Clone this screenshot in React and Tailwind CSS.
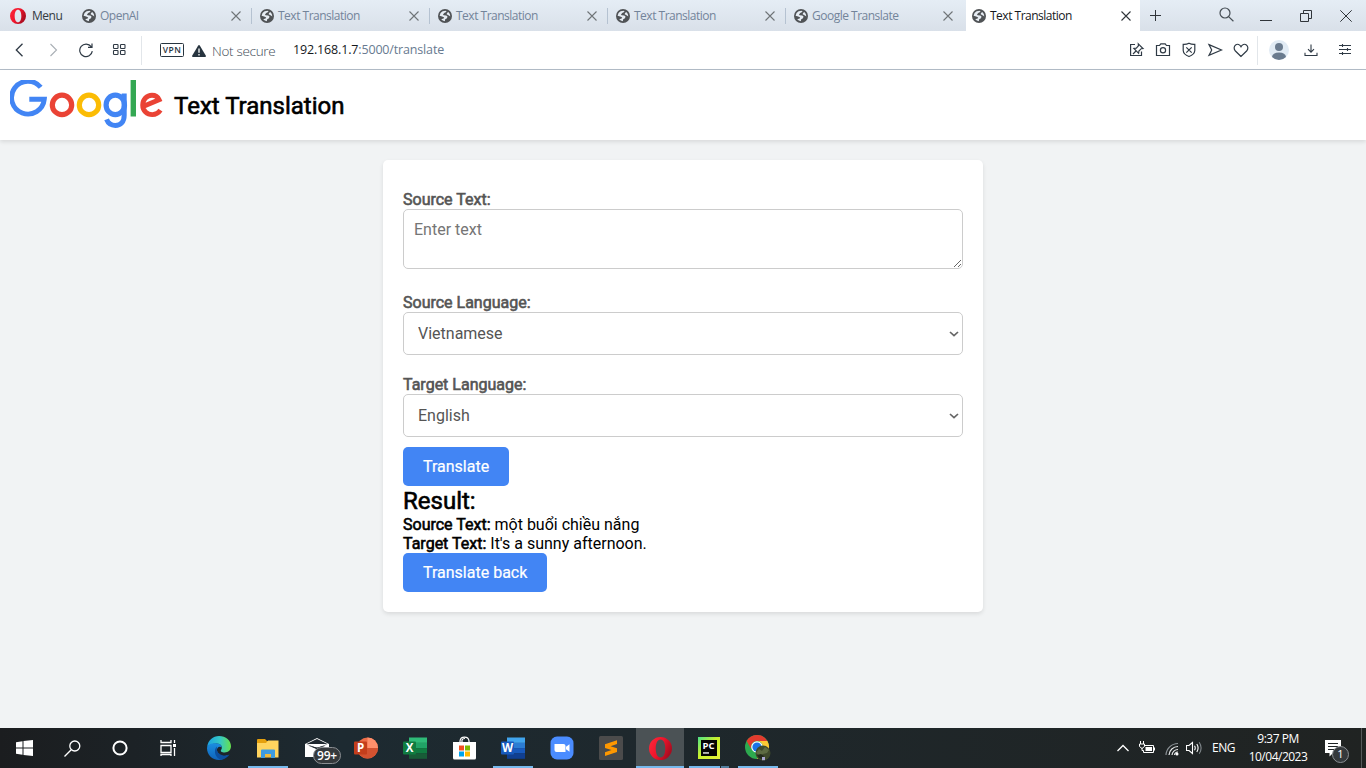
import React from "react";

const UI = "font-['Open_Sans','Noto_Sans',sans-serif]";

function Icon({ size = 16, className = "", children, sw = 1, color = "#2f3a45", vb = 16 }) {
  return (
    <svg width={size} height={size} viewBox={`0 0 ${vb} ${vb}`} fill="none" stroke={color} strokeWidth={sw} className={"shrink-0 " + className}>
      {children}
    </svg>
  );
}

function Globe() {
  return (
    <svg width="14" height="14" viewBox="0 0 14 14" className="shrink-0">
      <circle cx="7" cy="7" r="7" fill="#505356" />
      <path d="M1.600 6.800Q2 3.600 4.600 2.300L7.600 1.700L8.600 2.800L6.200 3.900L5 5.400L5.600 6.300L8.300 6.400L9.500 7.600L9 9.200L7.200 10.200L6.800 12.200Q4.600 12 3.200 10.300L5.600 9.600L6.200 8.400L4.200 7.500Z" fill="#e6ecf3" />
      <path d="M10.300 3Q12.300 4.700 12.300 7.400L10.900 6.600L8.700 5.300L9 4Z" fill="#e6ecf3" />
    </svg>
  );
}

function OperaO({ size }) {
  return (
    <svg width={size} height={size} viewBox="0 0 24 24" className="shrink-0">
      <defs>
        <linearGradient id={"op" + size} x1="0" x2="1" y1="0" y2=".5">
          <stop offset="0" stopColor="#ff2b3c" />
          <stop offset=".55" stopColor="#f0142b" />
          <stop offset="1" stopColor="#a90d20" />
        </linearGradient>
      </defs>
      <path fillRule="evenodd" fill={`url(#op${size})`} d="M12 0a12 12 0 1 0 0 24a12 12 0 0 0 0-24ZM12 2.6c3.2 0 5 4 5 9.4s-1.8 9.4-5 9.4s-5-4-5-9.4s1.800-9.400 5-9.400Z" />
    </svg>
  );
}

function Cross({ size = 10, color = "#6f7477" }) {
  return (
    <Icon size={size} vb={10} color={color} sw={1.1}>
      <path d="M.5 .5L9.5 9.5M9.5 .5L.5 9.5" />
    </Icon>
  );
}

const tabs = ["OpenAI", "Text Translation", "Text Translation", "Text Translation", "Google Translate"];

function TabBar() {
  return (
    <div className={"flex h-[31px] bg-linear-to-b from-[#e5edf5] to-[#d9e0e9] text-[12px] " + UI}>
      <div className="flex w-[74px] items-center pl-2.5 pt-[1px]">
        <OperaO size={16} />
        <span className="ml-[6px] text-[12px] tracking-[-0.5px] text-[#333a42]">Menu</span>
      </div>
      {tabs.map((t, i) => (
        <div key={i} className="flex w-[178px] items-center pl-2">
          <Globe />
          <span className="ml-1 w-[131px] tracking-[-0.5px] text-[#73849a]">{t}</span>
          <Cross />
          {i < 4 && <div className="ml-[10px] h-4 w-px shrink-0 bg-[#b5c2d1]" />}
        </div>
      ))}
      <div className="ml-[2px] flex w-[174px] items-center bg-white pl-1.5">
        <Globe />
        <span className="ml-1 w-[131px] tracking-[-0.5px] text-[#15181c]">Text Translation</span>
        <Cross color="#30353a" />
      </div>
      <div className="flex flex-1 items-center justify-between pl-[10px] pr-[14px]">
        <Icon size={11} vb={11} color="#30353a"><path d="M5.5 0V11M0 5.5H11" /></Icon>
        <div className="flex items-center">
          <Icon size={15} vb={15} sw={1.2} color="#454d54" className="relative -top-[1px]"><circle cx="6" cy="6" r="5" /><path d="M9.6 9.6L14.4 14.2" /></Icon>
          <Icon size={12} vb={12} color="#30353a" className="ml-[26px]"><path d="M0 10.5H12" /></Icon>
          <Icon size={12} vb={12} color="#30353a" className="ml-[28px]"><path d="M.5 3.5H8.5V11.5H.5ZM3.5 3.5V.5H11.5V8.5H8.5" /></Icon>
          <Icon size={12} vb={12} color="#30353a" className="ml-[28px]"><path d="M.3 .3L11.7 11.7M11.7 .3L.3 11.7" /></Icon>
        </div>
      </div>
    </div>
  );
}

function AddressBar() {
  return (
    <div className={"flex h-[39px] items-center border-b border-[#b3bdc8] bg-white " + UI}>
      <div className="flex w-[142px] items-center pl-3">
        <Icon sw={1.3}><path d="M10.5 1.8L4.3 8L10.5 14.2" /></Icon>
        <Icon sw={1.1} color="#a9afb5" className="ml-[17px]"><path d="M5.5 2L11.500 8L5.500 14" /></Icon>
        <Icon sw={1.2} className="ml-[18px] -translate-x-px"><path d="M13.2 4.7A6.3 6.3 0 1 0 14.3 9.2M14 1.5V5.3H10" /></Icon>
        <Icon sw={1.1} className="ml-[17px] -translate-x-px"><rect x="2.500" y="2.500" width="4.500" height="4" rx=".7" /><rect x="9.500" y="2.500" width="4.500" height="4" rx=".7" /><rect x="2.500" y="8.500" width="4.500" height="4" rx=".7" /><rect x="9.500" y="8.500" width="4.500" height="4" rx=".7" /></Icon>
      </div>
      <div className="-ml-px h-[29px] w-px bg-[#e2e6ea]" />
      <div className="ml-[18px] flex h-[14px] w-[24px] items-center justify-center rounded-[1.5px] border border-[#27343f] text-[8.5px] leading-none font-semibold tracking-[0.5px] text-[#27343f]">VPN</div>
      <svg width="14" height="12" viewBox="0 0 14 12" className="relative top-px ml-2">
        <path d="M6.2 .5Q7 -.4 7.8 .5L14 11Q14 12 13 12H1Q0 12 0 11Z" fill="#27343f" />
        <path d="M7 3.6V7.8M7 9V10.4" stroke="#fff" strokeWidth="1.3" />
      </svg>
      <span className="relative top-[1px] ml-[6px] w-[81px] text-[13.500px] font-light tracking-[-0.300px] whitespace-nowrap text-[#414c57]">Not secure</span>
      <span className="text-[12.500px] tracking-[-0.160px] text-[#687a90]"><span className="text-[#15181c]">192.168.1.7</span>:5000/translate</span>
      <div className="ml-auto flex items-center pr-[14px]">
        <div className="flex gap-[10px]">
          <Icon sw={1.2}><path d="M6 2.500H1.600V13.500H12.500V9.500M4 12L7 9M9.300 1.800L14 6.500L12.200 6.700L9.900 9L9.600 11.300L4.900 6.500L7.300 6.200L9.400 3.900Z" /></Icon>
          <Icon sw={1.2}><path d="M1.500 3.500H4.500L5.800 1.800H10.200L11.500 3.500H14.500V13.500H1.500Z" /><circle cx="8" cy="8.2" r="2.600" /></Icon>
          <Icon sw={1.2}><path d="M8 1.3Q10.5 2.600 13.800 2.400V8.500Q13.500 12.500 8 14.500Q2.500 12.500 2.200 8.500V2.400Q5.500 2.600 8 1.300ZM5.300 5.300L10.700 10.700M10.700 5.300L5.300 10.700" /></Icon>
          <Icon sw={1.2}><path d="M2 2.600L14.500 8L2 13.400L4.700 8Z" /></Icon>
          <Icon sw={1.2}><path d="M8 14.5L2.400 9C.6 7 .8 4.200 2.600 2.900C4.500 1.600 6.900 2.400 8 4.700C9.100 2.400 11.500 1.600 13.400 2.900C15.200 4.200 15.400 7 13.600 9Z" /></Icon>
        </div>
        <div className="ml-2 h-[29px] w-px bg-[#e2e6ea]" />
        <svg width="20" height="20" viewBox="0 0 20 20" className="ml-[11px]">
          <circle cx="10" cy="10" r="10" fill="#e1ebf4" /><circle cx="10" cy="7" r="4" fill="#6a7b8e" />
          <path d="M3 17Q3.5 12.4 10 12.4Q16.5 12.4 17 17Q14 20 10 20Q6 20 3 17Z" fill="#6a7b8e" />
        </svg>
        <Icon sw={1.1} className="ml-[14px]"><path d="M8 2.5V10M5 7.2L8 10.2L11 7.2M2 10.8V13.5H14V10.8" /></Icon>
        <Icon sw={1.1} className="ml-[18px] -mr-[1px]"><path d="M2 3.5H14M2 7.500H14M2 11.500H14M5.5 2V5M10.5 6V9M5.5 10V13" /></Icon>
      </div>
    </div>
  );
}

function Logo() {
  return (
    <svg width="153" height="49" viewBox="0 0 153 49" fill="none" role="img" aria-label="Google">
      <path d="M30.700 7.300A16.400 16.400 0 1 0 34.300 19.300H19.300" stroke="#4285f4" strokeWidth="4.900" />
      <circle cx="52" cy="24.9" r="9.700" stroke="#ea4335" strokeWidth="5.200" />
      <circle cx="79" cy="24.9" r="9.700" stroke="#fbbc05" strokeWidth="5.200" />
      <ellipse cx="105.3" cy="24.9" rx="9.2" ry="9.7" stroke="#4285f4" strokeWidth="5.200" />
      <path d="M114.200 13.6V35.2C114.200 41.8 110.6 45.4 105.3 45.4C101 45.4 98 43 96.6 39.4" stroke="#4285f4" strokeWidth="5" />
      <rect x="120.6" y="0" width="5.4" height="36.5" fill="#34a853" />
      <path d="M133 26.500L149.100 19.700C147.6 16.400 144.8 15.2 142 15.2C136.9 15.2 132.7 19.4 132.7 25C132.7 30.8 137 34.600 142.3 34.600C145.9 34.600 148.6 32.900 150.4 30.200" stroke="#ea4335" strokeWidth="4.900" />
    </svg>
  );
}

const BOLD = "[-webkit-text-stroke:0.6px_currentColor]";
const FIELD = "block w-full rounded-[5px] border border-[#ccc] bg-white text-[16px] text-[#555] outline-none";
const BUTTON = "block h-[39px] rounded-[5px] bg-[#4285f4] px-5 text-[16px] text-white [-webkit-text-stroke:0.2px_currentColor]";

function Select({ value }) {
  return (
    <div className="relative">
      <select className={FIELD + " h-[43px] appearance-none px-[14px]"}><option>{value}</option></select>
      <svg width="10" height="6" viewBox="0 0 10 6" className="pointer-events-none absolute top-[19px] right-[4px]" fill="none" stroke="#666" strokeWidth="1.700"><path d="M1 1L5 4.700L9 1" /></svg>
    </div>
  );
}

function Page() {
  return (
    <div className="flex flex-1 flex-col bg-[#f1f3f4] font-[Roboto,sans-serif]">
      <header className="flex h-[70px] items-center bg-white pl-[10px] shadow-[0_2px_4px_rgba(0,0,0,0.1)]">
        <div className="relative top-[-1px] w-[164px]"><Logo /></div>
        <h1 className={"relative top-px text-[24px] leading-7 text-black " + BOLD}>Text Translation</h1>
      </header>
      <main className="mx-auto mt-5 h-[452px] w-[600px] rounded-[5px] bg-white px-5 pt-[30px] text-[16px] leading-[19px] text-black shadow-[0_2px_4px_rgba(0,0,0,0.1)]">
        <label className={"block text-[#555] " + BOLD}>Source Text:</label>
        <textarea placeholder="Enter text" className={FIELD + " h-[60px] resize p-[10px] leading-[19px] placeholder:text-[#757575]"} />
        <label className={"mt-6 block text-[#555] " + BOLD}>Source Language:</label>
        <Select value="Vietnamese" />
        <label className={"mt-5 block text-[#555] " + BOLD}>Target Language:</label>
        <Select value="English" />
        <button className={"mt-[10px] " + BUTTON}>Translate</button>
        <h2 className={"h-[29px] pt-px text-[24px] leading-7 " + BOLD}>Result:</h2>
        <p><span className={BOLD}>Source Text:</span> một buổi chiều nắng</p>
        <p><span className={BOLD}>Target Text:</span> It's a sunny afternoon.</p>
        <button className={BUTTON}>Translate back</button>
      </main>
    </div>
  );
}

function Office({ letter, dark, shades, round }) {
  return (
    <svg width="24" height="22" viewBox="0 0 24 22">
      {round ? (
        <g><circle cx="13.5" cy="11" r="10.5" fill={shades[0]} /><path d="M13.5 .5A10.5 10.5 0 0 1 24 11H13.5Z" fill={shades[1]} /><path d="M3 11H24A10.5 10.5 0 0 1 3 11Z" fill={shades[2]} /></g>
      ) : (
        <g>{shades.map((s, i) => <rect key={i} x="6" y={i * 5.3 + 0.5} width="18" height="5.4" fill={s} />)}</g>
      )}
      <rect x="0" y="4.5" width="13" height="13" rx="1" fill={dark} />
      <text x="6.5" y="15.100" textAnchor="middle" fontSize="11.500" fontWeight="700" fontFamily="Open Sans, sans-serif" fill="#fff">{letter}</text>
    </svg>
  );
}

function AppIcon({ kind }) {
  switch (kind) {
    case "edge":
      return (
        <svg width="24" height="24" viewBox="0 0 24 24">
          <defs>
            <linearGradient id="e1" x1="0" x2="1"><stop offset="0" stopColor="#1ba2e2" /><stop offset=".55" stopColor="#36c9c4" /><stop offset="1" stopColor="#66e14d" /></linearGradient>
            <linearGradient id="e2" x1="0" x2="0" y1="0" y2="1"><stop offset="0" stopColor="#1b8ee0" /><stop offset="1" stopColor="#0f63ba" /></linearGradient>
          </defs>
          <path d="M.2 11C1 4 6 0 12 0c7 0 12 4.8 12 10.2c0 3.8-2.8 6.2-6.3 6.2c-3 0-4.700-1.200-3.500-2.700c2-2.700-.5-6.200-4.500-6.200C5.200 7.500 1.800 9 .2 11Z" fill="url(#e1)" />
          <path d="M0 12C.6 8.600 4 7.200 8.500 7.200c3.500 0 6 1.500 6.400 4.200C12 9.500 9.500 12 10 14.500c.8 4.500 6 7 10.500 4.500C18.500 22.300 15.500 24 12 24C5 24 0 18.800 0 12Z" fill="url(#e2)" />
          <path d="M9.800 10.500c-3.800 4-1.500 11.500 4 13.300c3.700-.5 6.800-2.300 8.700-5.300c-6 3.200-12.700-1-12.700-5.200Z" fill="#0c4f9f" />
        </svg>
      );
    case "folder":
      return (
        <svg width="22" height="19" viewBox="0 0 22 19">
          <path d="M0 1Q0 0 1 0H8L10 2H21V18H0Z" fill="#e5a00d" /><path d="M0 4H9L11 1.500H21.500V18.500H0Z" fill="#ffd45e" />
          <path d="M4 19V11.500Q4 10.500 5 10.500H17Q18 10.500 18 11.500V19H14V15H8V19Z" fill="#3d9be0" /><path d="M8 15H14V18H8Z" fill="#f0ba3b" />
        </svg>
      );
    case "mail":
      return (
        <div className="relative">
          <svg width="24" height="20" viewBox="0 0 24 20"><path d="M0 6L12 0L24 6V19H0Z" fill="#fff" /><path d="M1.500 6L12 1L22.500 6L12 11Z" fill="#1e272e" /><path d="M1.500 6H22.500L12 10Z" fill="#fff" /><path d="M3 7.500L12 11.200L21 7.500L12 9.600Z" fill="#1e272e" /></svg>
          <span className={"absolute top-[9px] left-2 flex h-[17px] w-[28px] items-center justify-center rounded-full border border-[#8b8f93] bg-[#35393c] text-[12px] font-semibold tracking-[-0.200px] text-white " + UI}>99+</span>
        </div>
      );
    case "ppt":
      return <Office letter="P" dark="#c43e1c" shades={["#ed6c47", "#ff8f6b", "#d35230"]} round />;
    case "excel":
      return <Office letter="X" dark="#107c41" shades={["#2fbb78", "#21a366", "#107c41", "#185c37"]} />;
    case "word":
      return <Office letter="W" dark="#185abd" shades={["#41a5ee", "#2b7cd3", "#185abd", "#103f91"]} />;
    case "store":
      return (
        <svg width="23" height="24" viewBox="0 0 23 24">
          <path d="M7 7V5Q7.500 1.200 11.500 1.200T16 5V7M9 7V4Q9.500 2.500 12 2.500" stroke="#fff" fill="none" strokeWidth="1.200" />
          <path d="M0 6H23V22Q23 23.500 21.500 23.500H1.500Q0 23.500 0 22Z" fill="#fff" />
          <path d="M6 9.500H11V14.500H6Z" fill="#f25022" /><path d="M12 9.500H17V14.500H12Z" fill="#7fba00" /><path d="M6 15.500H11V20.500H6Z" fill="#00a4ef" /><path d="M12 15.500H17V20.500H12Z" fill="#ffb900" />
        </svg>
      );
    case "zoom":
      return (
        <svg width="24" height="24" viewBox="0 0 24 24"><rect x=".5" y=".5" width="23" height="23" rx="6.500" fill="#4a8cff" /><path d="M4.500 8H13.500Q15.500 8 15.500 10V16H6.500Q4.500 16 4.500 14Z" fill="#fff" /><path d="M16 10.800L19.500 8.200V15.800L16 13.200Z" fill="#fff" /></svg>
      );
    case "sublime":
      return (
        <svg width="24" height="24" viewBox="0 0 24 24"><rect width="24" height="24" rx="1.500" fill="#4b4b4b" /><path d="M6 8.200L18 4.200V8L11.500 10.200L18 12.200V16L6 20V16.200L12.500 14L6 12Z" fill="#ff9800" /></svg>
      );
    case "pycharm":
      return (
        <svg width="22" height="22" viewBox="0 0 22 22">
          <defs><linearGradient id="pc" x1="0" y1="0" x2="1" y2="1"><stop offset="0" stopColor="#4be38a" /><stop offset=".45" stopColor="#c8f02d" /><stop offset="1" stopColor="#e6f23a" /></linearGradient></defs>
          <rect width="22" height="22" fill="url(#pc)" /><rect x="3" y="3" width="16" height="16" fill="#050505" />
          <text x="4.500" y="11.500" fontSize="9.500" fontWeight="700" fontFamily="Open Sans, sans-serif" fill="#fff">PC</text><rect x="5" y="15.300" width="6" height="1.300" fill="#fff" />
        </svg>
      );
    case "chrome":
      return (
        <svg width="26" height="26" viewBox="0 0 26 26">
          <circle cx="12" cy="12" r="12" fill="#2da94f" />
          <path d="M1.600 6A12 12 0 0 1 22.400 6H12A6 6 0 0 0 6.800 15Z" fill="#e33b2e" />
          <path d="M22.400 6A12 12 0 0 1 12 24L17.200 15A6 6 0 0 0 12 6Z" fill="#fcc934" />
          <circle cx="12" cy="12" r="5.800" fill="#fff" /><circle cx="12" cy="12" r="4.600" fill="#1a73e8" />
          <circle cx="18" cy="18" r="7.500" fill="#3f4a2c" /><path d="M11 18l3-4 3 2 3-4 4 3-2 3-4 1-3 2Z" fill="#5d6b42" /><path d="M12 20l4-1 3 2-2 3-3-1Z" fill="#232a1c" /><path d="M17 22h3v3.200h-3Z" fill="#a8a5d0" />
        </svg>
      );
    default:
      return <OperaO size={23} />;
  }
}

const apps = ["edge", "folder", "mail", "ppt", "excel", "store", "word", "zoom", "sublime", "opera", "pycharm", "chrome"];

function Taskbar() {
  const cell = "flex w-12 items-center justify-center";
  return (
    <div className={"flex h-10 bg-linear-to-r from-[#1b1d1f] via-[#1d2a31] via-25% to-[#202322] text-white " + UI}>
      <div className={cell}><svg width="17" height="16" viewBox="0 0 17 16" fill="#fff"><path d="M0 2.200L6.500 1.200V7.500H0ZM7.500 1L17 0V7.500H7.500ZM0 8.500H6.500V14.800L0 13.800ZM7.500 8.500H17V16L7.500 15Z" /></svg></div>
      <div className={cell}><Icon size={17} vb={17} sw={1.300} color="#fff"><circle cx="10.800" cy="6" r="5" /><path d="M7.200 9.800L.5 16.500" /></Icon></div>
      <div className={cell}><Icon sw={2} color="#fff"><circle cx="8" cy="8" r="6.600" /></Icon></div>
      <div className={cell}><Icon size={17} vb={17} sw={1.300} color="#fff"><path d="M1 0V2.500H11V0M1 5.500H11V12.500H1ZM1 16V14.500H11V16M14.500 0V3M14.500 8V16" /><rect x="13" y="4" width="3" height="3" fill="#fff" stroke="none" /></Icon></div>
      <div className="ml-[3px] flex gap-px">
        {apps.map((a) => (
          <div key={a} className={"flex w-12 flex-col items-center " + (a === "opera" ? "bg-[#4b5255]" : "")}>
            <div className="flex h-[38px] items-center pt-[2px]"><AppIcon kind={a} /></div>
            {a === "opera" && <div className="h-[2px] w-12 bg-[#76b9ed]" />}
            {(a === "folder" || a === "word" || a === "chrome") && <div className="h-[2px] w-10 bg-[#76b9ed]" />}
            {a === "pycharm" && <div className="flex h-[2px] w-10 gap-px"><div className="w-[31px] bg-[#76b9ed]" /><div className="w-2 bg-[#527f9f]" /></div>}
          </div>
        ))}
      </div>
      <div className="ml-auto flex items-center">
        <Icon size={12} vb={12} sw={1.300} color="#fff"><path d="M.5 9L6 3.500L11.500 9" /></Icon>
        <svg width="17" height="14" viewBox="0 0 17 14" className="ml-[10px]" fill="none" stroke="#fff"><path d="M6 4.500H14.500V11.500H4.500V9.500M15.500 6.500V9.500M1.500 0V3M4.500 0V3M3 7V9.500H4.500" /><path d="M.5 3H5.500V5.500L3 7.500L.5 5.500Z" /><path d="M6.500 6H13V10H6.500Z" fill="#fff" stroke="none" /></svg>
        <svg width="14" height="14" viewBox="0 0 14 14" className="relative top-[1px] ml-[9px]" fill="none" stroke="#e8eaeb" strokeWidth="1.200"><path d="M1 13A12 12 0 0 1 13 1.500" stroke="#8c9397" /><path d="M4 13A9 9 0 0 1 13 4.500M7 13A6 6 0 0 1 13 7.500M9.500 13A3.500 3.500 0 0 1 13 10" /><circle cx="12" cy="12" r="1.500" fill="#fff" stroke="none" /></svg>
        <svg width="17" height="14" viewBox="0 0 17 14" className="ml-[7px]" fill="none" stroke="#fff" strokeWidth="1.100"><path d="M.5 4.500H3L6.500 1.500V12.500L3 9.500H.5ZM8.500 4.800Q10 7 8.500 9.200M10.800 3Q13.400 7 10.800 11" /><path d="M13.200 1.200Q17 7 13.200 12.800" stroke="#81888c" /></svg>
        <span className="ml-[9px] w-[24px] text-[12px] tracking-[-0.500px]">ENG</span>
        <div className="ml-2 w-[68px] text-center text-[12px] leading-[18px] tracking-[-0.500px] whitespace-nowrap"><div>9:37 PM</div><div>10/04/2023</div></div>
        <div className="relative ml-[13px] h-5 w-[36px]">
          <svg width="16" height="17" viewBox="0 0 16 17" className="mt-[2px]"><path d="M0 0H16V13H8L4.500 16.500V13H0Z" fill="#fff" /><path d="M3 3.500H13M3 6.500H13M3 9.500H10" stroke="#1f2426" strokeWidth="1.200" /></svg>
          <span className="absolute top-[8px] left-[7px] flex h-[17px] w-[17px] items-center justify-center rounded-full border border-[#8b8f93] bg-[#35393c] text-[11px]">1</span>
        </div>
        <div className="mr-1 h-10 w-px bg-[#55595a]" />
      </div>
    </div>
  );
}

export default function App() {
  return (
    <div className="flex h-[768px] w-[1366px] flex-col overflow-hidden">
      <TabBar />
      <AddressBar />
      <Page />
      <Taskbar />
    </div>
  );
}
